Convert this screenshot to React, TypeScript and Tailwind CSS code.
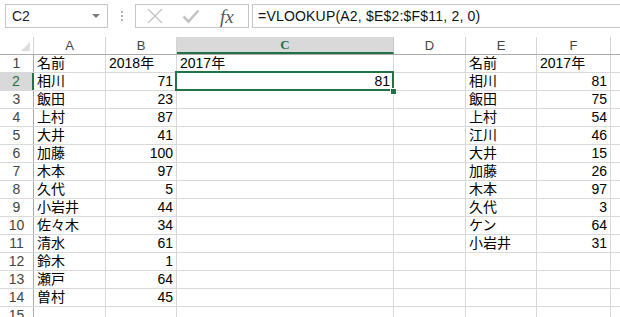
import React from "react";

const cols = [
  { key: "A", w: 72 },
  { key: "B", w: 71 },
  { key: "C", w: 217 },
  { key: "D", w: 72 },
  { key: "E", w: 71 },
  { key: "F", w: 74 },
];

type Cell = { t: string; r?: boolean };
const data: Record<string, Cell>[] = [];
const a = ["名前", "相川", "飯田", "上村", "大井", "加藤", "木本", "久代", "小岩井", "佐々木", "清水", "鈴木", "瀬戸", "曽村"];
const b = ["2018年", "71", "23", "87", "41", "100", "97", "5", "44", "34", "61", "1", "64", "45"];
const e = ["名前", "相川", "飯田", "上村", "江川", "大井", "加藤", "木本", "久代", "ケン", "小岩井"];
const f = ["2017年", "81", "75", "54", "46", "15", "26", "97", "3", "64", "31"];
for (let i = 0; i < 15; i++) {
  const row: Record<string, Cell> = {};
  if (i < 14) {
    row.A = { t: a[i] };
    row.B = { t: b[i], r: i > 0 };
  }
  if (i < 11) {
    row.E = { t: e[i] };
    row.F = { t: f[i], r: i > 0 };
  }
  if (i === 0) row.C = { t: "2017年" };
  if (i === 1) row.C = { t: "81", r: true };
  data.push(row);
}

const font = { fontFamily: '"Liberation Sans", "Noto Sans CJK JP", sans-serif' };

export default function App() {
  return (
    <div className="w-[620px] h-[317px] overflow-hidden bg-white" style={font}>
      {/* Formula bar */}
      <div className="h-[37px] flex items-start pt-[4px] relative">
        <div className="ml-[5px] w-[103px] h-[24px] border border-[#c6c6c6] flex items-center pl-[6px] pr-[7px] text-[14px] text-[#222]">
          <span className="flex-1">C2</span>
          <svg width="8" height="5" viewBox="0 0 8 5"><path d="M0 0 H8 L4 4 Z" fill="#7a7a7a" /></svg>
        </div>
        <div className="ml-[13px] mt-[7px] flex flex-col gap-[2px]">
          <div className="w-[2px] h-[2px] bg-[#b0b0b0]" />
          <div className="w-[2px] h-[2px] bg-[#b0b0b0]" />
          <div className="w-[2px] h-[2px] bg-[#b0b0b0]" />
        </div>
        <div className="ml-[12px] w-[114px] h-[24px] border border-[#c6c6c6] flex items-center">
          <svg className="ml-[10px]" width="18" height="16" viewBox="0 0 18 16">
            <path d="M2 1 L16 15 M16 1 L2 15" stroke="#c4c4c4" strokeWidth="1.4" />
          </svg>
          <svg className="ml-[18px]" width="18" height="16" viewBox="0 0 18 16">
            <path d="M1.5 8.5 L6.5 13.5 L16.5 2.5" stroke="#c4c4c4" strokeWidth="2.6" fill="none" />
          </svg>
          <span
            className="ml-[20px] text-[19px] italic text-[#555] leading-none"
            style={{ fontFamily: '"Liberation Serif", serif' }}
          >
            fx
          </span>
        </div>
        <div className="ml-[3px] flex-1 h-[24px] border border-r-0 border-[#c6c6c6] flex items-center pl-[5px] text-[14px] tracking-[0.2px] text-[#111]">
          =VLOOKUP(A2, $E$2:$F$11, 2, 0)
        </div>
      </div>

      {/* Column headers */}
      <div className="flex h-[18px] border-b border-[#ababab]">
        <div className="w-[34px] h-full border-r border-[#d4d4d4] relative">
          <svg className="absolute right-[3px] bottom-[3px]" width="9" height="9" viewBox="0 0 9 9">
            <path d="M9 0 V9 H0 Z" fill="#dcdcdc" />
          </svg>
        </div>
        {cols.map((c) =>
          c.key === "C" ? (
            <div
              key={c.key}
              className="h-full bg-[#d9d9d9] border-r border-[#c6c6c6] border-b-2 border-b-[#217346] flex items-center justify-center text-[13px] font-bold text-[#217346]"
              style={{ width: c.w, fontFamily: '"Liberation Serif", serif' }}
            >
              C
            </div>
          ) : (
            <div
              key={c.key}
              className="h-full border-r border-[#d4d4d4] flex items-center justify-center text-[13px] text-[#444]"
              style={{ width: c.w }}
            >
              {c.key}
            </div>
          )
        )}
        <div className="flex-1" />
      </div>

      {/* Rows */}
      {data.map((row, i) => (
        <div key={i} className="flex h-[18px] border-b border-[#d9d9d9]">
          <div
            className={
              i === 1
                ? "w-[34px] h-full bg-[#d9d9d9] border-r-2 border-[#217346] flex items-center justify-center text-[14px] text-[#217346]"
                : "w-[34px] h-full border-r border-[#ababab] flex items-center justify-center text-[14px] text-[#444]"
            }
          >
            {i + 1}
          </div>
          {cols.map((c) => {
            const cell = row[c.key];
            const sel = i === 1 && c.key === "C";
            return (
              <div
                key={c.key}
                className={
                  "h-full border-r border-[#d9d9d9] flex items-center text-[14px] text-black whitespace-nowrap " +
                  (sel ? "relative z-10 " : "") +
                  (cell?.r ? "justify-end pr-[3px]" : "pl-[3px]")
                }
                style={{ width: c.w }}
              >
                {cell?.t}
                {sel && (
                  <>
                    <div className="absolute left-[-2px] top-[-2px] right-[-1px] bottom-[-1px] border-2 border-[#217346]" />
                    <div className="absolute right-[-4px] bottom-[-5px] w-[7px] h-[7px] bg-[#217346] border border-white" />
                  </>
                )}
              </div>
            );
          })}
          <div className="flex-1" />
        </div>
      ))}
    </div>
  );
}
